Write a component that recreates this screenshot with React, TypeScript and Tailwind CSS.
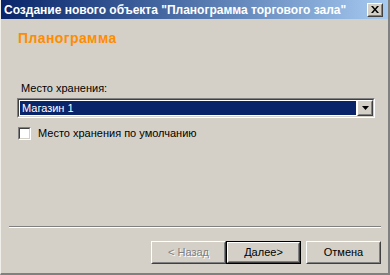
import React from 'react';

const font = { fontFamily: '"Liberation Sans", Arial, sans-serif' };

const Raised: React.FC<{ className?: string; children?: React.ReactNode }> = ({ className, children }) => (
    <div className={"border border-t-white border-l-white border-r-[#404040] border-b-[#404040] " + (className ?? "")}>
        <div className="w-full h-full border border-t-[#d4d0c8] border-l-[#d4d0c8] border-r-[#808080] border-b-[#808080] flex items-center justify-center">
            {children}
        </div>
    </div>
);

const App: React.FC = () => {
    return (
        <div className="w-[390px] h-[275px] bg-[#d4d0c8] flex flex-col text-[11px] text-black border-l border-l-[#f0efea] border-r-2 border-r-[#808080] border-b-2 border-b-[#808080]" style={font}>
            {/* title bar */}
            <div className="h-[19px] flex items-center justify-between pl-[3px] pr-[5px] bg-gradient-to-r from-[#0a246a] to-[#a6caf0]">
                <span className="text-white font-bold text-[12px] leading-none whitespace-nowrap">
                    Создание нового объекта "Планограмма торгового зала"
                </span>
                <Raised className="w-[16px] h-[14px] bg-[#d4d0c8]">
                    <svg width="8" height="7" viewBox="0 0 8 7">
                        <path d="M0 0h2l2 2.5L6 0h2L5 3.5 8 7H6L4 4.5 2 7H0l3-3.5z" fill="#000" />
                    </svg>
                </Raised>
            </div>

            <div className="pl-[17px] mt-[11px] h-[16px] text-[14px] font-bold leading-[16px] tracking-[0.4px] text-[#ff8c00]">Планограмма</div>

            <div className="pl-[20px] mt-[36px] leading-[13px]">Место хранения:</div>

            {/* combo */}
            <div className="ml-[16px] mt-[3px] w-[358px] h-[20px] border border-t-[#808080] border-l-[#808080] border-r-white border-b-white">
                <div className="w-full h-full border border-t-[#404040] border-l-[#404040] border-r-[#d4d0c8] border-b-[#d4d0c8] bg-white flex">
                    <div className="flex-1 m-[1px] bg-[#0a246a] text-white flex items-center pl-[2px] leading-none">
                        Магазин 1
                    </div>
                    <Raised className="w-[16px] h-full bg-[#d4d0c8]">
                        <svg width="7" height="4" viewBox="0 0 7 4">
                            <path d="M0 0h7L3.5 4z" fill="#000" />
                        </svg>
                    </Raised>
                </div>
            </div>

            {/* checkbox */}
            <div className="flex items-center ml-[17px] mt-[9px] h-[13px] gap-[7px]">
                <div className="w-[13px] h-[13px] border border-t-[#808080] border-l-[#808080] border-r-white border-b-white">
                    <div className="w-full h-full bg-white border border-t-[#404040] border-l-[#404040] border-r-[#d4d0c8] border-b-[#d4d0c8]" />
                </div>
                <span className="leading-none">Место хранения по умолчанию</span>
            </div>

            <div className="flex-1" />

            {/* separator */}
            <div className="ml-[8px] w-[372px] border-t border-t-[#808080] border-b border-b-white" />

            {/* buttons */}
            <div className="flex pl-[150px] mt-[13px] mb-[9px]">
                <Raised className="w-[75px] h-[23px]">
                    <span className="text-[#808080] [text-shadow:1px_1px_0_#fff]">&lt; Назад</span>
                </Raised>
                <div className="w-[75px] h-[23px] border border-black">
                    <Raised className="w-full h-full">
                        <span>Далее&gt;</span>
                    </Raised>
                </div>
                <Raised className="w-[75px] h-[23px] ml-[5px]">
                    <span>Отмена</span>
                </Raised>
            </div>
        </div>
    );
};

export default App;
